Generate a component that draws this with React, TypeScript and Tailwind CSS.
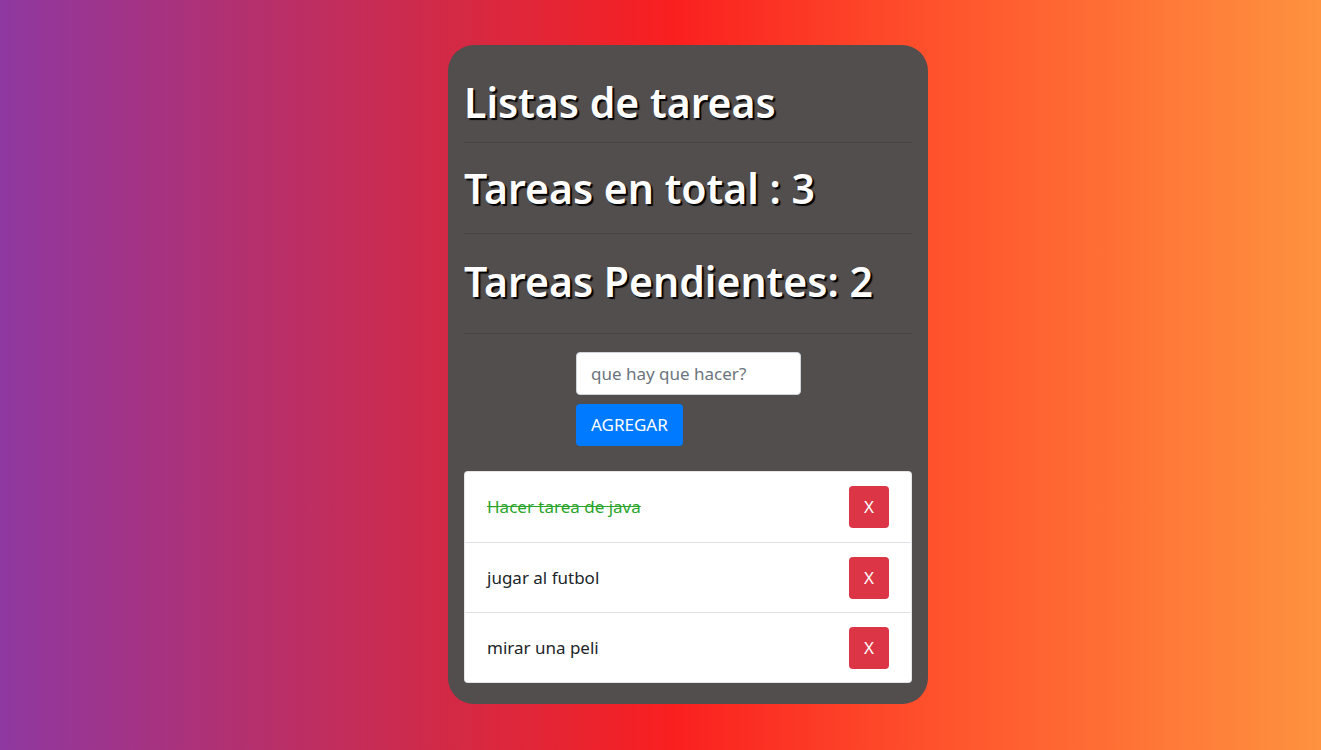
import { useState } from "react";

type Task = { id: number; text: string; done: boolean };

const initialTasks: Task[] = [
  { id: 1, text: "Hacer tarea de java", done: true },
  { id: 2, text: "jugar al futbol", done: false },
  { id: 3, text: "mirar una peli", done: false },
];

export default function App() {
  const [tasks, setTasks] = useState<Task[]>(initialTasks);
  const [draft, setDraft] = useState("");

  const pending = tasks.filter((t) => !t.done).length;

  const addTask = () => {
    if (!draft.trim()) return;
    setTasks([...tasks, { id: Date.now(), text: draft, done: false }]);
    setDraft("");
  };

  return (
    <div className="min-h-[750px] w-full bg-[linear-gradient(to_right,#8f38a1_0%,#d02a48_33%,#fa1f1f_51%,#ff552d_72%,#fe923f_100%)] font-['Segoe_UI','Noto_Sans',sans-serif] pt-[45px] pl-[448px]">
      <div className="w-[480px] h-[659px] rounded-[26px] bg-[#514e4d] px-4 pt-[33px]">
        {/* Header */}
        <h1 className="text-[41px] leading-[48px] font-semibold text-white [text-shadow:2px_2px_1px_#000] mb-2">
          Listas de tareas
        </h1>
        <hr className="border-0 border-t border-black/10 mt-4" />
        <h1 className="text-[41px] leading-[48px] font-semibold text-white [text-shadow:2px_2px_1px_#000] mt-[21px] mb-2">
          Tareas en total : {tasks.length}
        </h1>
        <hr className="border-0 border-t border-black/10 mt-[21px]" />
        <h1 className="text-[41px] leading-[48px] font-semibold text-white [text-shadow:2px_2px_1px_#000] mt-[23px] mb-2">
          Tareas Pendientes: {pending}
        </h1>
        <hr className="border-0 border-t border-black/10 mt-7" />

        {/* Form */}
        <div className="flex flex-col items-start pl-[112px] pt-[18px] gap-[9px]">
          <input
            value={draft}
            onChange={(e) => setDraft(e.target.value)}
            placeholder="que hay que hacer?"
            className="w-[225px] h-[43px] rounded-[4px] border border-[#ced4da] bg-white px-[14px] text-[17px] text-[#495057] placeholder:text-[#6c757d] outline-none"
          />
          <button
            onClick={addTask}
            className="h-[42px] px-[15px] rounded-[4px] bg-[#007bff] text-white text-[17px]"
          >
            AGREGAR
          </button>
        </div>

        {/* List */}
        <ul className="mt-[25px] bg-white rounded-[4px] border border-black/10">
          {tasks.map((task, i) => (
            <li
              key={task.id}
              className={`flex items-center justify-between h-[70px] pl-[22px] pr-[22px] ${
                i > 0 ? "border-t border-[#dee2e6]" : ""
              }`}
            >
              <span
                onClick={() =>
                  setTasks(tasks.map((t) => (t.id === task.id ? { ...t, done: !t.done } : t)))
                }
                className={`text-[17px] ${
                  task.done ? "line-through text-[#2ca52c]" : "text-[#212529]"
                }`}
              >
                {task.text}
              </span>
              <button
                onClick={() => setTasks(tasks.filter((t) => t.id !== task.id))}
                className="w-10 h-[42px] rounded-[4px] bg-[#dc3545] text-white text-[17px]"
              >
                X
              </button>
            </li>
          ))}
        </ul>
      </div>
    </div>
  );
}
